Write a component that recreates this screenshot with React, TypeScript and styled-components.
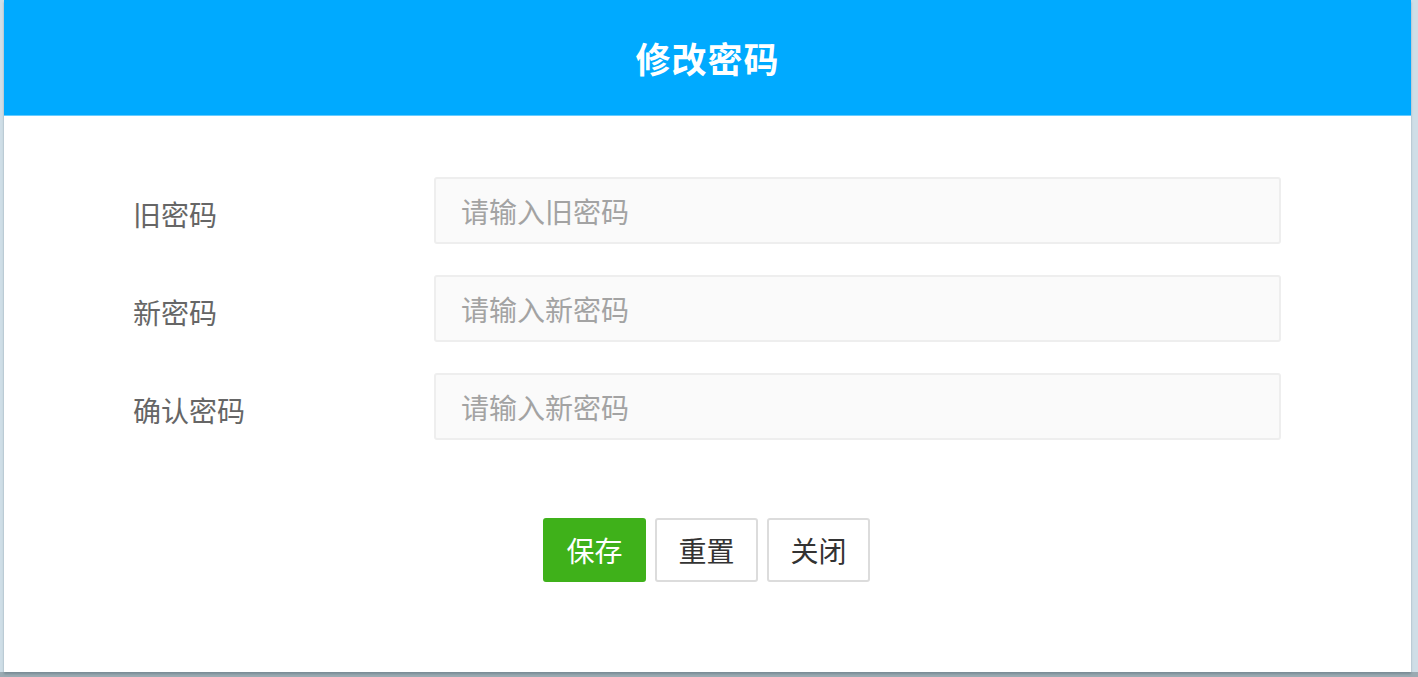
import React from "react";
import styled, { createGlobalStyle } from "styled-components";

const Global = createGlobalStyle`
  html, body {
    margin: 0;
    padding: 0;
    height: 677px;
    overflow: hidden;
    background: #cfdee7;
  }
  body {
    font-family: "Noto Sans CJK SC", "Noto Sans", sans-serif;
  }
  * { box-sizing: border-box; }
`;

const Page = styled.div`
  height: 677px;
  padding: 0 7px 5px 4px;
  display: flex;
  background: linear-gradient(to bottom, #cfdee7 0, #cfdee7 672px, #9aaab2 672px);
`;

const Dialog = styled.div`
  flex: 1;
  background: #ffffff;
  display: flex;
  flex-direction: column;
  box-shadow: 0 2px 2px rgba(90, 110, 120, 0.5);
`;

const Header = styled.div`
  height: 116px;
  background: #00aaff;
  border-bottom: 1px solid #66ccff;
  display: flex;
  align-items: center;
  justify-content: center;
  color: #ffffff;
  font-size: 35px;
  font-weight: 700;
  letter-spacing: 1px;
`;

const Form = styled.div`
  padding: 61px 130px 0 129px;
  display: flex;
  flex-direction: column;
  gap: 31px;
`;

const Row = styled.div`
  display: grid;
  grid-template-columns: 301px 1fr;
  align-items: center;
  height: 67px;
`;

const Label = styled.label`
  font-size: 28px;
  color: #666666;
  padding-top: 6px;
`;

const Input = styled.input`
  height: 67px;
  width: 100%;
  border: 2px solid #eeeeee;
  border-radius: 3px;
  background: #fafafa;
  padding: 0 25px;
  font-family: "Noto Sans CJK SC", sans-serif;
  font-size: 28px;
  color: #333;
  outline: none;
  &::placeholder {
    color: #a3a3a3;
  }
`;

const Actions = styled.div`
  display: flex;
  justify-content: center;
  gap: 9px;
  margin-top: 78px;
  padding-right: 2px;
`;

const Button = styled.button<{ $primary?: boolean }>`
  width: 103px;
  height: 64px;
  border-radius: 3px;
  font-family: "Noto Sans CJK SC", sans-serif;
  font-size: 28px;
  cursor: pointer;
  border: 2px solid ${(p) => (p.$primary ? "#3fb11a" : "#dcdcdc")};
  background: ${(p) => (p.$primary ? "#3fb11a" : "#ffffff")};
  color: ${(p) => (p.$primary ? "#ffffff" : "#333333")};
  padding: 0;
`;

const fields = [
  { label: "旧密码", placeholder: "请输入旧密码" },
  { label: "新密码", placeholder: "请输入新密码" },
  { label: "确认密码", placeholder: "请输入新密码" },
];

export default function App() {
  return (
    <>
      <Global />
      <Page>
        <Dialog>
          <Header>修改密码</Header>
          <Form>
            {fields.map((f) => (
              <Row key={f.label}>
                <Label>{f.label}</Label>
                <Input type="password" placeholder={f.placeholder} />
              </Row>
            ))}
          </Form>
          <Actions>
            <Button $primary>保存</Button>
            <Button>重置</Button>
            <Button>关闭</Button>
          </Actions>
        </Dialog>
      </Page>
    </>
  );
}
